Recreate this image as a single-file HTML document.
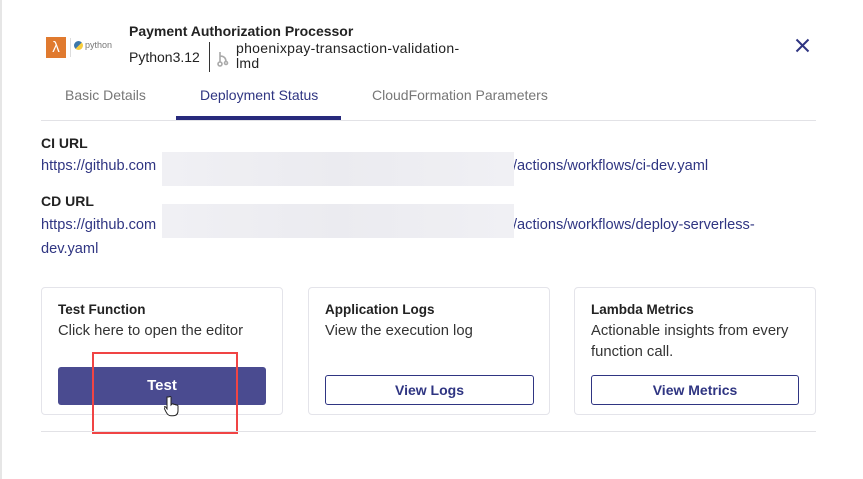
<!DOCTYPE html>
<html><head><style>
*{margin:0;padding:0;box-sizing:border-box}
body{width:863px;height:479px;background:#fff;font-family:"Liberation Sans",sans-serif;position:relative;overflow:hidden;color:#222}
.a{position:absolute;white-space:nowrap}
.lnk{color:#2f3582;font-size:14.6px}
.blur{position:absolute;background:linear-gradient(90deg,#f0f0f4,#ebebf0 50%,#f0f0f4);}
.card{position:absolute;top:287px;height:128px;border:1px solid #e4e4ea;border-radius:4px}
.ct{position:absolute;left:16px;top:14px;font-weight:bold;font-size:13.5px;color:#222}
.cd{position:absolute;left:16px;top:33px;font-size:14.8px;color:#333;line-height:21px;white-space:normal}
.ob{position:absolute;height:30px;border:1px solid #2f3582;border-radius:3px;color:#2f3582;font-weight:bold;font-size:14px;text-align:center;line-height:28px}
</style></head><body>
<div class="a" style="left:0;top:0;width:2px;height:479px;background:#e6e6e6"></div>
<div class="a" style="left:46px;top:37px;width:20px;height:21px;background:#e07a2f;color:#fff;font-size:15px;text-align:center;line-height:21px">λ</div>
<div class="a" style="left:70px;top:38px;width:1px;height:19px;background:#ddd"></div>
<div class="a" style="left:74px;top:41px;width:9px;height:9px;border-radius:50%;background:linear-gradient(135deg,#3d78aa 50%,#f7cd3d 50%)"></div>
<div class="a" style="left:85px;top:40px;font-size:9px;color:#777">python</div>
<div class="a" style="left:129px;top:23px;font-weight:bold;font-size:14px;color:#222">Payment Authorization Processor</div>
<div class="a" style="left:129px;top:49px;font-size:14px;color:#222">Python3.12</div>
<div class="a" style="left:209px;top:42px;width:1px;height:30px;background:#333"></div>
<svg class="a" style="left:217px;top:50px" width="12" height="18" viewBox="0 0 12 18"><g fill="none" stroke="#aaa" stroke-width="1.6"><circle cx="3" cy="14" r="2"/><path d="M3 2v10M3 6q6 0 6 6"/><circle cx="9" cy="13" r="1.5"/></g></svg>
<div class="a" style="left:236px;top:41px;font-size:14px;color:#222;line-height:15px;letter-spacing:0.3px">phoenixpay-transaction-validation-<br>lmd</div>
<svg class="a" style="left:795px;top:38px" width="15" height="15" viewBox="0 0 15 15"><path d="M1.5 1.5l12 12M13.5 1.5l-12 12" stroke="#2f3582" stroke-width="2"/></svg>
<div class="a" style="left:65px;top:87px;font-size:14px;color:#777">Basic Details</div>
<div class="a" style="left:200px;top:87px;font-size:14px;color:#2f3582">Deployment Status</div>
<div class="a" style="left:372px;top:87px;font-size:14px;color:#777">CloudFormation Parameters</div>
<div class="a" style="left:41px;top:120px;width:775px;height:1px;background:#e2e2e6"></div>
<div class="a" style="left:176px;top:116px;width:165px;height:4px;background:#272a7c"></div>
<div class="a" style="left:41px;top:135px;font-weight:bold;font-size:14px">CI URL</div>
<div class="a lnk" style="left:41px;top:158px">https://github.com</div>
<div class="a lnk" style="left:513px;top:158px">/actions/workflows/ci-dev.yaml</div>
<div class="blur" style="left:162px;top:152px;width:352px;height:34px"></div>
<div class="a" style="left:41px;top:193px;font-weight:bold;font-size:14px">CD URL</div>
<div class="a lnk" style="left:41px;top:217px">https://github.com</div>
<div class="a lnk" style="left:513px;top:217px">/actions/workflows/deploy-serverless-</div>
<div class="a lnk" style="left:41px;top:241px">dev.yaml</div>
<div class="blur" style="left:162px;top:204px;width:352px;height:34px"></div>
<div class="card" style="left:41px;width:242px"><div class="ct">Test Function</div><div class="cd">Click here to open the editor</div>
<div class="a" style="left:16px;top:79px;width:208px;height:38px;background:#4a4b90;border-radius:3px;color:#fff;font-weight:bold;font-size:15px;text-align:center;line-height:38px">Test</div></div>
<div class="card" style="left:308px;width:242px"><div class="ct">Application Logs</div><div class="cd">View the execution log</div><div class="ob" style="left:16px;top:87px;width:209px">View Logs</div></div>
<div class="card" style="left:574px;width:242px"><div class="ct">Lambda Metrics</div><div class="cd" style="width:225px">Actionable insights from every function call.</div><div class="ob" style="left:16px;top:87px;width:208px">View Metrics</div></div>
<div class="a" style="left:92px;top:352px;width:146px;height:82px;border:2px solid #f04444"></div>
<div class="a" style="left:41px;top:431px;width:775px;height:1px;background:#e2e2e6"></div>
<svg class="a" style="left:164px;top:395px" width="16" height="22" viewBox="0 0 16 22"><path d="M5 2q1.5-1 2 0v8l1-1q1.5-.5 2 .5q1.5-.5 2 .5q1.5-.3 2 .8v5q0 5-5 5h-2q-3 0-5-4l-2-4q0-1.5 1.5-1l1.5 2V2z" fill="#fff" stroke="#222" stroke-width="1"/></svg>
</body></html>
